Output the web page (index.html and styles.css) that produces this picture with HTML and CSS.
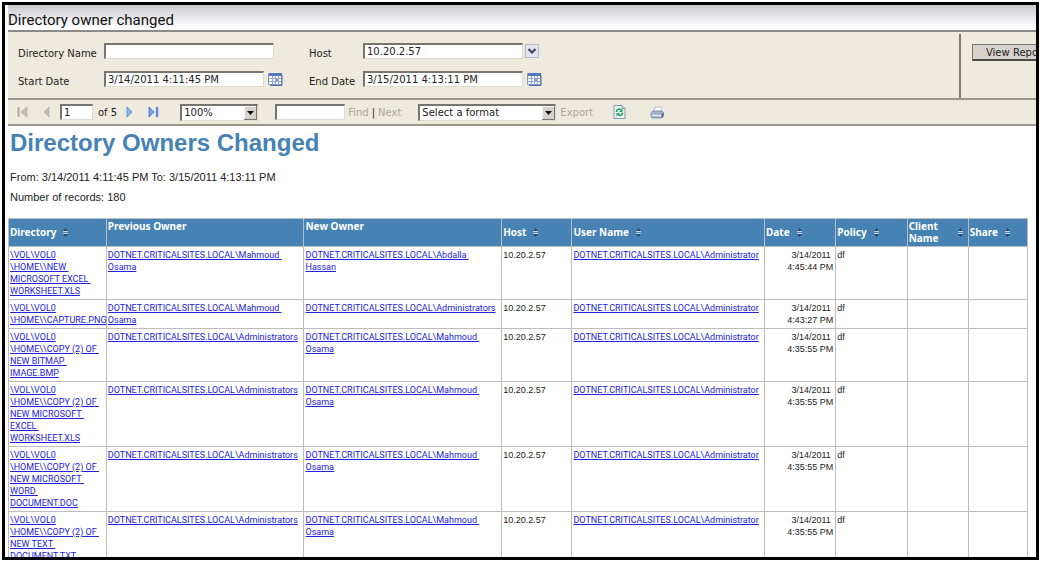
FILE: index.html
```html
<!DOCTYPE html>
<html lang="en">
<head>
<meta charset="utf-8">
<title>Directory owner changed</title>
<link rel="stylesheet" href="styles.css">
</head>
<body>
<svg class="defs" aria-hidden="true">
  <symbol id="sort" viewBox="0 0 7 9"><path d="M3.5 0 6.5 3.5h-6zM3.5 9 6.5 5.5h-6z" fill="#2c4a66"/><path d="M1 3.5h5M1 5.500h5" stroke="#c3d3e2"/></symbol>
  <symbol id="calendar" viewBox="0 0 15 14"><path d="M.5 1.5h13v11H.5z" fill="#fff" stroke="#8096bd"/><path d="M1 1h13v3H1z" fill="#5479bd"/><path d="M1 6.5h12M1 9.500h12M4.500 4v8M7.500 4v8M10.500 4v8" stroke="#8da8d8"/><path d="M8 7h2v2H8z" fill="#d98686"/><path d="M14 3v10.500H2" fill="none" stroke="#4e6fa8"/></symbol>
  <symbol id="arrow" viewBox="0 0 13 14"><path d="M0 0h13v14H0z" fill="#d6d3cd"/><path d="M.5 13.500V.5H12" fill="none" stroke="#f7f6f2"/><path d="M12.500 0v13.500H0" fill="none" stroke="#77746e"/><path d="M3 5h7L6.500 9z" fill="#111"/></symbol>
</svg>
<main class="frame">
  <h1 class="title">Directory owner changed</h1>
  <form class="params">
    <div class="fields">
      <label for="dir">Directory Name</label>
      <div class="field"><input class="box wide" id="dir" type="text"></div>
      <label for="host">Host</label>
      <div class="field tight"><select class="box date" id="host"><option>10.20.2.57</option></select>
        <svg class="chev" viewBox="0 0 14 14" aria-hidden="true"><path d="M.5.5h13v13H.5z" fill="#e3e5ee" stroke="#b5b9ca"/><path d="M3.500 5 7 8.500 10.500 5" fill="none" stroke="#3c455f" stroke-width="2.200"/></svg></div>
      <label for="start">Start Date</label>
      <div class="field"><input class="box date" id="start" type="text" value="3/14/2011 4:11:45 PM"><button class="icon" type="button" aria-label="Pick start date"><svg width="15" height="14"><use href="#calendar"/></svg></button></div>
      <label for="end">End Date</label>
      <div class="field"><input class="box date" id="end" type="text" value="3/15/2011 4:13:11 PM"><button class="icon" type="button" aria-label="Pick end date"><svg width="15" height="14"><use href="#calendar"/></svg></button></div>
    </div>
    <div class="submit"><button class="view" type="button">View Report</button></div>
  </form>
  <div class="toolbar">
    <div class="group pages">
      <button class="icon" type="button" aria-label="First page"><svg width="11" height="12" viewBox="0 0 11 12"><path d="M1.500 1v10" stroke="#aaa9a2" stroke-width="2"/><path d="M10 1v10L4 6z" fill="#bdbcb6" stroke="#a4a39d" stroke-width=".6"/></svg></button>
      <button class="icon" type="button" aria-label="Previous page"><svg width="7" height="12" viewBox="0 0 7 12"><path d="M6 1v10L1 6z" fill="#bdbcb6" stroke="#a4a39d" stroke-width=".6"/></svg></button>
    </div>
    <div class="group count"><input class="box page" type="text" value="1" aria-label="Page"><span>of 5</span></div>
    <div class="group pages">
      <button class="icon" type="button" aria-label="Next page"><svg width="7" height="12" viewBox="0 0 7 12"><path d="M1 1v10l5-5z" fill="#8fb4f0" stroke="#4c82d8" stroke-width=".8"/></svg></button>
      <button class="icon" type="button" aria-label="Last page"><svg width="11" height="12" viewBox="0 0 11 12"><path d="M1 1v10l5-5z" fill="#79a3ee" stroke="#3c72d0" stroke-width=".8"/><path d="M9 1v10" stroke="#5a8ae0" stroke-width="2.500"/></svg></button>
    </div>
    <div class="drop zoom"><select class="box" aria-label="Zoom"><option>100%</option></select><svg class="arrow" width="13" height="14" aria-hidden="true"><use href="#arrow"/></svg></div>
    <div class="group find"><input class="box search" type="text" aria-label="Find text"><a class="off" href="#">Find</a><span>|</span><a class="off" href="#">Next</a></div>
    <div class="group export"><div class="drop format"><select class="box" aria-label="Export format"><option>Select a format</option></select><svg class="arrow" width="13" height="14" aria-hidden="true"><use href="#arrow"/></svg></div><a class="off" href="#">Export</a></div>
    <div class="group actions">
      <button class="icon" type="button" aria-label="Refresh"><svg width="13" height="14" viewBox="0 0 13 14"><path d="M1 .5h8l3 3v10H1z" fill="#edf8f2" stroke="#7f9db4"/><path d="M9 .5v3h3" fill="#bcd1df" stroke="#7f9db4"/><path d="M3.500 7c0-3 3-3.500 4.500-2M9.500 7.500c0 3-3 3.500-4.500 2" fill="none" stroke="#25a35c" stroke-width="1.600"/><path d="M9.500 3.500V7H6zM3.500 11.500V8H7z" fill="#25a35c"/></svg></button>
      <button class="icon" type="button" aria-label="Print"><svg width="14" height="13" viewBox="0 0 14 13"><path d="M5 1h7l-2 6H3z" fill="#f7f9fe" stroke="#a5aec6" stroke-width=".8"/><path d="M1 6.500 3 5h9l1.500 1.500V10L12 12H2L1 10z" fill="#a6b1cf" stroke="#7886ac" stroke-width=".8"/><path d="M2 9.500h9" stroke="#eef1fa" stroke-width="1.200"/><path d="m11.500 8 2-1.500V10L12 12z" fill="#566890"/></svg></button>
    </div>
  </div>
  <section class="report">
    <h2>Directory Owners Changed</h2>
    <p>From: 3/14/2011 4:11:45 PM To: 3/15/2011 4:13:11 PM</p>
    <p>Number of records: 180</p>
    <table>
      <colgroup><col class="c-dir"><col class="c-owner"><col class="c-owner"><col class="c-host"><col class="c-user"><col class="c-small"><col class="c-small"><col class="c-client"><col></colgroup>
      <thead><tr>
        <th><div class="head">Directory <svg class="sort"><use href="#sort"/></svg></div></th>
        <th>Previous Owner</th>
        <th>New Owner</th>
        <th><div class="head">Host <svg class="sort"><use href="#sort"/></svg></div></th>
        <th><div class="head">User Name <svg class="sort"><use href="#sort"/></svg></div></th>
        <th><div class="head">Date <svg class="sort"><use href="#sort"/></svg></div></th>
        <th><div class="head">Policy <svg class="sort"><use href="#sort"/></svg></div></th>
        <th><div class="head split"><span>Client<br>Name</span> <svg class="sort"><use href="#sort"/></svg></div></th>
        <th><div class="head">Share <svg class="sort"><use href="#sort"/></svg></div></th>
      </tr></thead>
      <tbody>
        <tr><td><a href="#">\VOL\VOL0<br>\HOME\\NEW&nbsp;<br>MICROSOFT EXCEL&nbsp;<br>WORKSHEET.XLS</a></td><td><a href="#">DOTNET.CRITICALSITES.LOCAL\Mahmoud&nbsp;<br>Osama</a></td><td><a href="#">DOTNET.CRITICALSITES.LOCAL\Abdalla&nbsp;<br>Hassan</a></td><td>10.20.2.57</td><td><a href="#">DOTNET.CRITICALSITES.LOCAL\Administrator</a></td><td class="when">3/14/2011&nbsp;<br>4:45:44 PM</td><td>df</td><td></td><td></td></tr>
        <tr><td><a href="#">\VOL\VOL0<br>\HOME\\CAPTURE.PNG</a></td><td><a href="#">DOTNET.CRITICALSITES.LOCAL\Mahmoud&nbsp;<br>Osama</a></td><td><a href="#">DOTNET.CRITICALSITES.LOCAL\Administrators</a></td><td>10.20.2.57</td><td><a href="#">DOTNET.CRITICALSITES.LOCAL\Administrator</a></td><td class="when">3/14/2011&nbsp;<br>4:43:27 PM</td><td>df</td><td></td><td></td></tr>
        <tr><td><a href="#">\VOL\VOL0<br>\HOME\\COPY (2) OF&nbsp;<br>NEW BITMAP&nbsp;<br>IMAGE.BMP</a></td><td><a href="#">DOTNET.CRITICALSITES.LOCAL\Administrators</a></td><td><a href="#">DOTNET.CRITICALSITES.LOCAL\Mahmoud&nbsp;<br>Osama</a></td><td>10.20.2.57</td><td><a href="#">DOTNET.CRITICALSITES.LOCAL\Administrator</a></td><td class="when">3/14/2011&nbsp;<br>4:35:55 PM</td><td>df</td><td></td><td></td></tr>
        <tr><td><a href="#">\VOL\VOL0<br>\HOME\\COPY (2) OF&nbsp;<br>NEW MICROSOFT&nbsp;<br>EXCEL&nbsp;<br>WORKSHEET.XLS</a></td><td><a href="#">DOTNET.CRITICALSITES.LOCAL\Administrators</a></td><td><a href="#">DOTNET.CRITICALSITES.LOCAL\Mahmoud&nbsp;<br>Osama</a></td><td>10.20.2.57</td><td><a href="#">DOTNET.CRITICALSITES.LOCAL\Administrator</a></td><td class="when">3/14/2011&nbsp;<br>4:35:55 PM</td><td>df</td><td></td><td></td></tr>
        <tr><td><a href="#">\VOL\VOL0<br>\HOME\\COPY (2) OF&nbsp;<br>NEW MICROSOFT&nbsp;<br>WORD&nbsp;<br>DOCUMENT.DOC</a></td><td><a href="#">DOTNET.CRITICALSITES.LOCAL\Administrators</a></td><td><a href="#">DOTNET.CRITICALSITES.LOCAL\Mahmoud&nbsp;<br>Osama</a></td><td>10.20.2.57</td><td><a href="#">DOTNET.CRITICALSITES.LOCAL\Administrator</a></td><td class="when">3/14/2011&nbsp;<br>4:35:55 PM</td><td>df</td><td></td><td></td></tr>
        <tr><td><a href="#">\VOL\VOL0<br>\HOME\\COPY (2) OF&nbsp;<br>NEW TEXT&nbsp;<br>DOCUMENT.TXT</a></td><td><a href="#">DOTNET.CRITICALSITES.LOCAL\Administrators</a></td><td><a href="#">DOTNET.CRITICALSITES.LOCAL\Mahmoud&nbsp;<br>Osama</a></td><td>10.20.2.57</td><td><a href="#">DOTNET.CRITICALSITES.LOCAL\Administrator</a></td><td class="when">3/14/2011&nbsp;<br>4:35:55 PM</td><td>df</td><td></td><td></td></tr>
      </tbody>
    </table>
  </section>
</main>
</body>
</html>
```
FILE: styles.css
```css
* { box-sizing: border-box; }
body { margin: 0; padding: 2px 4px 2px 2px; background: #fff; color: #222; }
body, input, select, button { font-family: "DejaVu Sans", Verdana, sans-serif; font-size: 10px; }
.defs { display: none; }
svg { display: block; flex: none; }

.frame { height: calc(100vh - 4px); padding-left: 3px; border: 3px solid #000; overflow: hidden; background: #fff; }

.title {
  margin: 0; height: 27px; padding: 2px 0 0; border-bottom: 2px solid #8b8a86;
  background: linear-gradient(#c9c8cc, #f4f4f6 70%, #fff);
  font: 15px/26px Roboto, Tahoma, sans-serif; color: #111;
}

.params { display: flex; background: #eeeadd; border-bottom: 2px solid #99968c; }
.fields {
  flex: 1; display: grid; grid-template-columns: 86px 205px 54px 1fr;
  row-gap: 12px; align-items: center; padding: 11px 0 11px 10px;
}
.fields label { padding-top: 4px; white-space: nowrap; }
.field { display: flex; align-items: center; gap: 4px; }
.tight { gap: 2px; }
.submit { flex: none; width: 77px; margin-top: 2px; padding: 10px 0 0 11px; border-left: 2px solid #7f7c74; }
.view {
  width: 88px; height: 17px; padding: 0; background: #d6d3ce; color: #222;
  border: 1px solid #77746e; border-bottom: 2px solid #4c4a46;
}

.box {
  display: block; height: 16px; margin: 0; padding: 0 0 0 2px; border: 1px solid #dedbd2;
  border-top: 2px solid #77756f; border-left: 2px solid #77756f; border-radius: 0;
  background: #fff; color: #222; appearance: none; line-height: 12px;
}
.wide { width: 170px; }
.date { width: 160px; }
.page { width: 33px; }
.search { width: 70px; }
.chev { width: 14px; height: 14px; }
.icon { display: block; padding: 0; border: 0; background: none; }

.toolbar {
  display: flex; align-items: center; height: 26px; padding-left: 9px;
  background: #eeeadd; border-bottom: 2px solid #99968c; white-space: nowrap;
}
.group { display: flex; align-items: center; }
.pages { gap: 15px; }
.count { gap: 5px; margin: 0 9px 0 10px; }
.drop { position: relative; }
.drop select { width: 100%; height: 17px; }
.arrow { position: absolute; top: 2px; right: 1px; pointer-events: none; }
.zoom { width: 78px; margin-left: 21px; }
.find { gap: 3px; margin: 0 17px; }
.format { width: 138px; }
.export { gap: 4px; }
.actions { gap: 24px; margin-left: 20px; }
.off { color: #aaa79c; text-decoration: none; }

.report { padding-right: 8px; font-family: "Liberation Sans", Arial, sans-serif; }
.report h2 { margin: 0; padding: 3px 0 10px 2px; font-size: 24px; line-height: 28px; color: #4682b4; }
.report p { margin: 0; padding-left: 2px; font-size: 11px; line-height: 20px; }
table { width: 100%; margin-top: 11px; border-collapse: collapse; table-layout: fixed; font-size: 9px; line-height: 12px; }
.c-dir { width: 9.6%; }
.c-owner { width: 19.4%; }
.c-host { width: 6.9%; }
.c-user { width: 18.9%; }
.c-small { width: 7%; }
.c-client { width: 6%; }
th, td { border: 1px solid #bdbdbd; text-align: left; vertical-align: top; white-space: nowrap; }
td { padding: 2px 2px 2px 1px; }
th {
  height: 28px; padding: 1px; background: #4682b4; color: #fff;
  font: bold 10px/12px "Noto Sans", Tahoma, sans-serif;
}
.head { display: flex; align-items: center; gap: 6px; min-height: 24px; }
.split { justify-content: space-between; padding-right: 3px; }
.sort { width: 7px; height: 9px; }
td a { color: #2222dd; text-decoration: underline; font-family: Roboto, Arial, sans-serif; }
.when { text-align: right; }
```
